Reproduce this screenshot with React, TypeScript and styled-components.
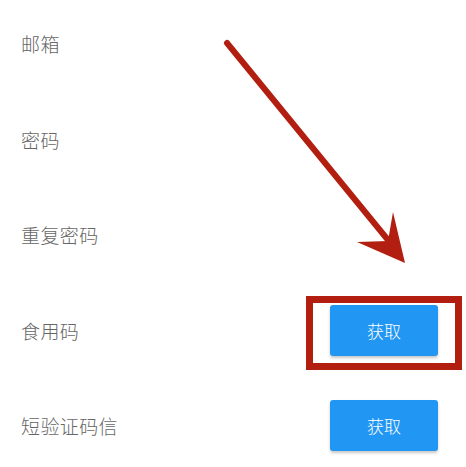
import React from 'react';
import styled, { createGlobalStyle } from 'styled-components';

const GlobalStyle = createGlobalStyle`
  html, body {
    margin: 0;
    padding: 0;
    background: #ffffff;
  }
  body {
    font-family: "Noto Sans CJK SC", "Noto Sans", sans-serif;
  }
`;

type Field = { label: string; action?: string; marked?: boolean };

const fields: Field[] = [
  { label: '邮箱' },
  { label: '密码' },
  { label: '重复密码' },
  { label: '食用码', action: '获取', marked: true },
  { label: '短验证码信', action: '获取' },
];

export default function App() {
  return (
    <Page>
      <GlobalStyle />
      <Form>
        {fields.map((f) => (
          <Row key={f.label}>
            <Label>{f.label}</Label>
            {f.action && (
              <ButtonWrap>
                <GetButton>{f.action}</GetButton>
                {f.marked && <Highlight />}
              </ButtonWrap>
            )}
          </Row>
        ))}
      </Form>
      <Arrow viewBox="0 0 466 467" width="466" height="467">
        <line
          x1="227"
          y1="43"
          x2="388"
          y2="240"
          stroke="#b21f10"
          strokeWidth="6"
          strokeLinecap="round"
        />
        <polygon points="393,212 405,263 357,242 388,241" fill="#b21f10" />
      </Arrow>
    </Page>
  );
}

const Page = styled.div`
  position: relative;
  width: 466px;
  height: 467px;
  overflow: hidden;
`;

const Form = styled.div`
  display: flex;
  flex-direction: column;
  margin-top: -4px;
  padding: 0 28px 0 21px;
`;

const Row = styled.div`
  height: 95.5px;
  display: flex;
  align-items: center;
  justify-content: space-between;
`;

const Label = styled.span`
  font-size: 19px;
  font-weight: 300;
  color: #666666;
  letter-spacing: 0.4px;
`;

const ButtonWrap = styled.div`
  position: relative;
`;

const GetButton = styled.button`
  width: 108px;
  height: 51px;
  border: none;
  border-radius: 3px;
  background: #2196f3;
  color: #ffffff;
  font-family: "Noto Sans CJK SC", "Noto Sans", sans-serif;
  font-size: 17px;
  font-weight: 300;
  box-shadow: 0 2px 3px rgba(0, 0, 0, 0.22);
  padding: 0;
`;

const Highlight = styled.div`
  position: absolute;
  left: -24px;
  right: -24px;
  top: -9px;
  bottom: -14px;
  border: 7px solid #b21f10;
  box-sizing: border-box;
  pointer-events: none;
`;

const Arrow = styled.svg`
  position: absolute;
  left: 0;
  top: 0;
  pointer-events: none;
`;
